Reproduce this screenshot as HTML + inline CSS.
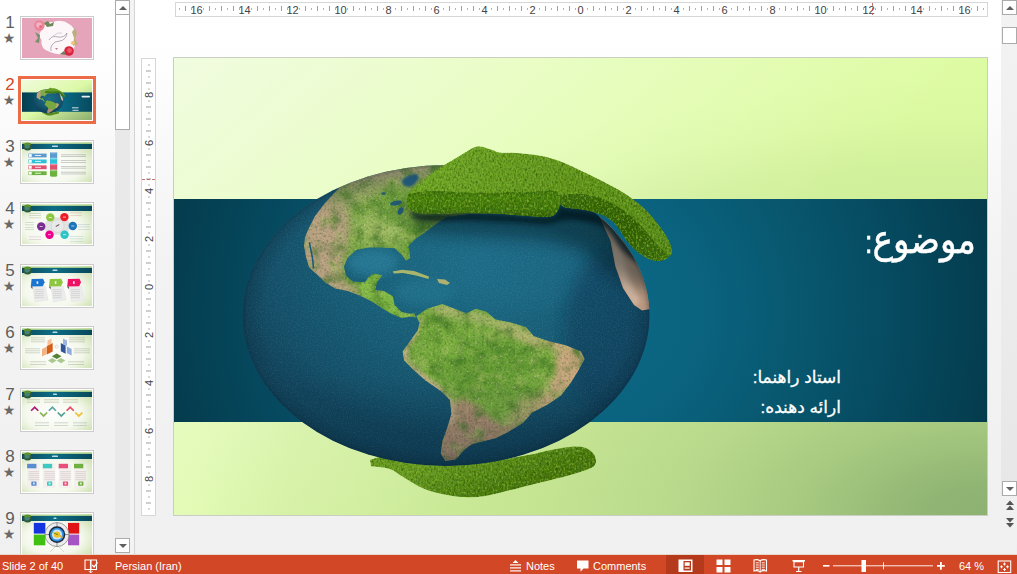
<!DOCTYPE html>
<html lang="fa">
<head>
<meta charset="utf-8">
<title>PowerPoint</title>
<style>
html,body{margin:0;padding:0;}
body{width:1017px;height:574px;overflow:hidden;position:relative;font-family:"Liberation Sans", "DejaVu Sans", sans-serif;
 background:linear-gradient(to bottom,#ffffff 0px,#ffffff 40px,#f3f3f3 260px,#f0f0f0 574px);}
.abs{position:absolute;}
#thumbs{left:0;top:0;width:115px;height:554px;overflow:hidden;}
.tn{position:absolute;left:0;width:115px;height:62px;}
.tn .num{position:absolute;left:3px;top:-3px;width:14px;font-size:17px;color:#5e5e5e;text-align:center;line-height:20px;}
.tn .star{position:absolute;left:2px;top:15px;width:14px;font-size:14px;color:#6a6a6a;text-align:center;line-height:14px;}
.tn .fr{position:absolute;left:20px;top:0;width:72px;height:42px;border:1px solid #cbcbcb;background:#fff;overflow:hidden;}
.tn .fr svg{position:absolute;left:1px;top:1px;}
.tn.sel .num{color:#d24726;}
.tn.sel .fr{left:18px;top:-2px;width:72px;height:42px;border:3px solid #eb6c47;}
.tn.sel .fr svg{left:1px;top:1px}
#tscroll{left:115px;top:0;width:15px;height:554px;background:#e9e9e9;}
.sbtn{position:absolute;background:#fff;border:1px solid #ababab;box-sizing:border-box;}
.arr-up{position:absolute;left:50%;top:50%;width:0;height:0;margin:-2px 0 0 -4px;border-left:4px solid transparent;border-right:4px solid transparent;border-bottom:4px solid #606060;}
.arr-dn{position:absolute;left:50%;top:50%;width:0;height:0;margin:-2px 0 0 -4px;border-left:4px solid transparent;border-right:4px solid transparent;border-top:4px solid #606060;}
#split{left:130px;top:0;width:4px;height:554px;background:#f3f3f3;border-right:1px solid #d4d4d4;}
#hruler{left:175px;top:2px;width:813px;height:15px;background:#fff;border:1px solid #d6d6d6;box-sizing:border-box;}
#vruler{left:141px;top:58px;width:15px;height:458px;background:#fff;border:1px solid #d6d6d6;box-sizing:border-box;}
#rscroll{left:1001px;top:0;width:16px;height:554px;background:linear-gradient(to bottom,#f3f3f3 0,#e7e7e7 496px,transparent 496px);}
#status{left:0;top:554px;width:1017px;height:20px;background:#d24726;color:#fff;font-size:11px;border-top:1px solid #e8d8cc;box-sizing:border-box;}
#status span{position:absolute;top:1px;line-height:21px;white-space:nowrap;}
#slide{left:174px;top:58px;width:813px;height:457px;overflow:hidden;
 background:radial-gradient(ellipse 900px 450px at 100% 100%,rgba(134,171,109,.92) 0%,rgba(134,171,109,.88) 7%,rgba(134,171,109,.64) 20%,rgba(134,171,109,.43) 33.5%,rgba(134,171,109,.28) 50%,rgba(134,171,109,.15) 71%,rgba(134,171,109,.12) 78%,rgba(134,171,109,.08) 83%,rgba(134,171,109,.03) 88%,rgba(134,171,109,0) 97%),linear-gradient(139.3deg,rgb(241,252,224) 0%,rgb(231,253,190) 34%,rgb(221,251,162) 60.6%,rgb(221,251,160) 100%);
 box-shadow:0 0 0 1px #c9cec2;}
#band{left:0;top:141px;width:813px;height:223px;background:radial-gradient(ellipse 430px 420px at 50% 50%,#0c6a87 0%,#0a627e 30%,#08576e 52%,#064b61 72%,#043a4b 100%);}
.t1{position:absolute;right:11px;top:158px;color:#fff;font-size:33px;direction:rtl;white-space:nowrap;line-height:50px;transform:scale(1.04,1.18);transform-origin:100% 58%;-webkit-text-stroke:.45px #fff;}
.t1 span{font-size:27px;}
.t2{position:absolute;right:146px;color:#fff;font-size:17px;direction:rtl;white-space:nowrap;line-height:24px;-webkit-text-stroke:.3px #fff;}
</style>
</head>
<body>
<div id="thumbs" class="abs">
<div class="tn" style="top:16px"><div class="num">1</div><div class="star">&#9733;</div><div class="fr"><svg width="70" height="40" viewBox="0 0 70 40"><rect width="70" height="40" fill="#e5a4b9"/><path d="M19 13 Q21 4 31 4 Q40 .5 47 6 Q55 10 53 21 Q55 32 45 34.500 Q36 38 28 34 Q18 31 19.500 22 Q16 17 19 13 Z" fill="#fdf6f8"/><circle cx="17.400" cy="7.500" r="5.200" fill="#ec8399"/><circle cx="17" cy="7" r="2.800" fill="#f5b3c0"/><circle cx="18.500" cy="8.500" r="1.300" fill="#e0607c"/><circle cx="47" cy="33" r="4.800" fill="#d8243e"/><circle cx="47.500" cy="32.500" r="2.400" fill="#ee5a68"/><path d="M22 5 l4 -2 l2 3 l4 -2 l-1 4 l-6 1 z" fill="#6f8a5a"/><path d="M13 14 l3 6 l-3 4 l4 1 l1 -8 z" fill="#78906a"/><path d="M50 14 l3 -4 l2 5 l-2 6 l3 5 l-5 2 l1 -8 z" fill="#b9b07c"/><circle cx="51" cy="25" r="2" fill="#f1c27a"/><path d="M38 36 l4 -3 l2 4 z" fill="#6b7f58"/><path d="M33 30 l1.500 2 l1.500 -2 z" fill="#c07b8a"/><path d="M27 22 Q30 17 36 19 Q42 20 45 15 Q44 22 38 23 Q32 23 30 27 Q28 30 29 33" fill="none" stroke="#a8a6b2" stroke-width=".9"/><path d="M31 18 Q35 14 40 15" fill="none" stroke="#b8b4c0" stroke-width=".6"/></svg></div></div>
<div class="tn sel" style="top:78px"><div class="num">2</div><div class="star">&#9733;</div><div class="fr"><svg width="70" height="40" viewBox="0 0 70 40"><defs><linearGradient id="t2b" x1="0" y1="0" x2="1" y2="1"><stop offset="0" stop-color="#f0fbde"/><stop offset=".5" stop-color="#dcf9a6"/><stop offset="1" stop-color="#8bae6e"/></linearGradient><linearGradient id="t2h" x1="0" y1="0" x2="1" y2="0"><stop offset="0" stop-color="#053f51"/><stop offset=".55" stop-color="#0b6b87"/><stop offset="1" stop-color="#064a5e"/></linearGradient></defs><rect width="70" height="40" fill="url(#t2b)"/><rect x="0" y="12.4" width="70" height="19.4" fill="url(#t2h)"/><g transform="translate(25.9 21.7) scale(.0752 .0792) translate(-446 -321.5)"><defs><radialGradient id="mo" cx=".55" cy=".38" r=".62"><stop offset="0" stop-color="#1d6c87"/><stop offset=".6" stop-color="#165972"/><stop offset="1" stop-color="#0f4058"/></radialGradient><clipPath id="mgc"><ellipse cx="446" cy="315.500" rx="203.500" ry="150.500"/></clipPath></defs><path d="M370.0 459.8 C370.0 459.8 371.0 466.5 371.0 466.5 C371.0 466.5 384.5 467.2 389.8 469.0 C395.1 470.8 397.2 473.7 403.0 477.0 C408.8 480.3 416.3 485.9 424.3 489.0 C432.3 492.1 442.0 494.4 450.9 495.7 C459.8 497.0 468.5 497.7 477.4 497.0 C486.2 496.3 494.3 493.9 504.0 491.7 C513.7 489.5 525.2 486.4 535.8 483.7 C546.4 481.0 558.8 478.1 567.7 475.7 C576.6 473.2 584.4 471.0 589.0 469.0 C593.6 467.0 594.7 466.2 595.6 463.8 C596.5 461.4 595.8 457.1 594.2 454.5 C592.6 451.9 589.5 449.2 586.0 447.9 C582.5 446.6 578.7 446.2 573.0 446.5 C567.3 446.8 558.9 448.4 551.8 449.7 C544.7 451.0 537.6 453.1 530.5 454.5 C523.4 455.9 516.4 457.2 509.3 458.0 C502.2 458.8 496.9 458.7 488.0 459.0 C479.1 459.3 465.7 460.0 456.0 460.0 C446.3 460.0 438.4 459.5 429.6 459.0 C420.8 458.5 410.5 457.5 403.0 457.0 C395.5 456.5 390.0 455.5 384.5 456.0 C379.0 456.5 370.0 459.8 370.0 459.8 Z" fill="#578b1e"/><ellipse cx="446" cy="315.500" rx="203.500" ry="150.500" fill="url(#mo)"/><g clip-path="url(#mgc)"><path d="M340 187 L325 203 L315 216 L309 228 L305 237 L304 246 L306 257 L309 267 L313 271 L317.900 275.300 L324.900 282.300 L335.300 288.400 L347.500 291 L359.700 295.400 L371.900 301.500 L382.400 308.400 L392.800 314.500 L401.500 318 L412 316.500 L416 317.500 L414 313 L410 313.700 L401.500 312 L394.600 305 L392.800 296.200 L384 291 L375.400 290 L377 282.300 L382.400 275.300 L373.700 273.600 L368.400 277 L365 282.300 L352.700 281.400 L345.800 275.300 L344 266.600 L347.500 257.900 L356.200 250 L368.400 247.400 L380.600 247.400 L394.600 248.300 L401.500 254.400 L405.900 260.500 L410.300 257.900 L408.500 245.700 L415.500 238.700 L426 231.700 L436 224 L446.500 217 L470 214 L500 214 L500 150 L330 150 Z" fill="#82a94c"/><path d="M330 190 L346 187 L350 225 L346 252 L340 268 L346 282 L340 296 L295 270 L300 215 Z" fill="#b8a482"/><path d="M416.300 316.300 L427 308.700 L442.300 304 L454.500 308.700 L466.600 313.300 L475.800 308.700 L486.500 311.800 L495.600 319.400 L510.900 322.400 L526 327 L533.700 336 L547.400 340.700 L565.700 345.300 L581 351.400 L584.600 359 L578 371.200 L570.300 383.400 L561 395.600 L547.400 404.800 L532.200 412.400 L523 423 L507.800 432.200 L495.600 438.300 L483.400 441.300 L471.200 444.400 L463.600 450.500 L456 459.600 L445.300 461 L440.700 453.500 L442.300 441.300 L446.800 429 L451.400 413.900 L449.900 400 L440.700 391 L425.500 380.400 L413.300 369.700 L404.100 360.500 L402.600 351.400 L410.200 340.700 L417.900 330 L419.400 322.400 Z" fill="#78a840"/><path d="M556 340 L590 348 L590 365 L572 388 L550 406 L544 396 L562 372 Z" fill="#c6a680"/><path d="M506 424 L528 414 L492 445 L452 466 L436 460 L440 440 L450 410 L476 412 Z" fill="#ad8e74"/><path d="M596 205 L599.600 217.500 L610.600 241 L615.300 266 L623 288 L634 305 L642 310.600 L650 309 L652 285 L640 250 L625 225 L615 205 Z" fill="#dcc0a8"/></g><path d="M480.2 146.4 C483.3 146.5 486.9 148.2 490.3 149.2 C493.7 150.2 495.9 152.0 500.3 152.6 C504.8 153.2 510.1 152.4 517.0 153.0 C524.0 153.6 534.7 154.5 542.0 155.9 C549.3 157.3 554.3 159.0 560.9 161.5 C567.5 164.0 574.8 167.6 581.8 170.9 C588.8 174.2 595.7 177.7 602.7 181.3 C609.7 185.0 616.6 188.3 623.6 192.8 C630.6 197.3 638.6 203.1 644.5 208.5 C650.4 213.9 655.0 220.0 659.0 225.2 C663.0 230.4 666.3 235.6 668.5 239.8 C670.7 244.0 671.8 247.5 672.0 250.3 C672.2 253.1 671.3 254.8 669.5 256.5 C667.7 258.2 664.3 260.2 661.2 260.7 C658.1 261.2 654.5 261.1 650.7 259.7 C646.9 258.3 642.0 255.4 638.2 252.4 C634.4 249.4 630.8 245.7 627.7 241.9 C624.6 238.1 622.2 233.1 619.4 229.4 C616.6 225.8 614.5 222.6 611.0 220.0 C607.5 217.4 603.4 215.4 598.5 213.7 C593.6 211.9 587.4 210.6 581.8 209.5 C576.2 208.4 568.7 208.4 565.0 207.4 C561.3 206.4 559.8 203.5 559.8 203.5 C559.8 203.5 559.8 206.7 558.8 208.6 C557.8 210.5 556.3 213.8 553.8 215.2 C551.3 216.6 549.9 216.9 543.8 216.9 C537.7 216.9 525.4 215.8 517.0 215.2 C508.6 214.6 502.0 214.0 493.6 213.6 C485.2 213.2 475.5 212.7 466.9 212.7 C458.3 212.7 450.2 213.6 441.8 213.6 C433.4 213.6 422.1 213.5 416.7 212.7 C411.3 211.9 410.9 210.4 409.2 208.6 C407.5 206.8 407.0 204.1 406.7 201.9 C406.4 199.7 406.4 197.4 407.5 195.2 C408.6 193.0 410.5 191.3 413.4 188.5 C416.3 185.7 420.8 181.8 425.0 178.5 C429.2 175.2 433.4 171.8 438.4 168.4 C443.4 165.1 449.6 161.7 455.2 158.4 C460.8 155.1 467.7 150.4 471.9 148.4 C476.1 146.4 477.1 146.3 480.2 146.4 Z" fill="#659d25"/><path d="M408.0 194.0 C408.0 194.0 423.6 191.2 433.4 191.0 C443.2 190.8 455.8 192.4 466.9 192.7 C478.0 193.0 489.2 192.8 500.3 192.7 C511.4 192.5 524.5 192.1 533.7 191.8 C542.9 191.5 551.2 189.6 555.5 191.0 C559.8 192.4 559.1 197.3 559.6 200.2 C560.1 203.1 559.8 206.1 558.8 208.6 C557.8 211.1 556.3 213.8 553.8 215.2 C551.3 216.6 549.9 216.9 543.8 216.9 C537.7 216.9 525.4 215.8 517.0 215.2 C508.6 214.6 502.0 214.0 493.6 213.6 C485.2 213.2 475.5 212.7 466.9 212.7 C458.3 212.7 450.2 213.6 441.8 213.6 C433.4 213.6 422.1 213.5 416.7 212.7 C411.3 211.9 410.9 210.4 409.2 208.6 C407.5 206.8 406.9 204.3 406.7 201.9 C406.5 199.5 408.0 194.0 408.0 194.0 Z" fill="#447b15"/><path d="M560.9 195.0 C560.9 195.0 574.8 193.2 581.8 193.9 C588.8 194.6 595.7 196.2 602.7 199.0 C609.7 201.8 617.3 206.2 623.6 210.6 C629.9 215.0 635.1 220.0 640.3 225.2 C645.5 230.4 650.4 237.0 654.9 241.9 C659.4 246.8 665.0 252.0 667.4 254.4 C669.8 256.8 669.5 256.5 669.5 256.5 C669.5 256.5 664.3 260.2 661.2 260.7 C658.1 261.2 654.5 261.1 650.7 259.7 C646.9 258.3 642.0 255.4 638.2 252.4 C634.4 249.4 630.8 245.7 627.7 241.9 C624.6 238.1 622.2 233.1 619.4 229.4 C616.6 225.8 614.5 222.6 611.0 220.0 C607.5 217.4 603.4 215.4 598.5 213.7 C593.6 211.9 587.4 210.6 581.8 209.5 C576.2 208.4 568.7 208.4 565.0 207.4 C561.3 206.4 559.8 203.5 559.8 203.5 C559.8 203.5 560.9 195.0 560.9 195.0 Z" fill="#3a6c12"/></g><rect x="59.500" y="15.800" width="8.500" height="1.600" rx=".8" fill="#fff" opacity=".9"/><rect x="50" y="27.300" width="6.500" height="1" fill="#fff" opacity=".8"/><rect x="50.500" y="29.800" width="6" height="1" fill="#fff" opacity=".8"/></svg></div></div>
<div class="tn" style="top:140px"><div class="num">3</div><div class="star">&#9733;</div><div class="fr"><svg width="70" height="40" viewBox="0 0 70 40"><defs><radialGradient id="tb3" cx=".45" cy=".6" r=".75"><stop offset="0" stop-color="#ffffff"/><stop offset=".55" stop-color="#f4f8ec"/><stop offset="1" stop-color="#c5dba4"/></radialGradient><linearGradient id="th3" x1="0" y1="0" x2="1" y2="0"><stop offset="0" stop-color="#0a4a5c"/><stop offset=".45" stop-color="#0d6d86"/><stop offset="1" stop-color="#07485a"/></linearGradient></defs><rect width="70" height="40" fill="url(#tb3)"/><rect x="0" y="1" width="70" height="1" fill="#c6e89a"/><rect x="0" y="1.8" width="70" height="5.2" fill="url(#th3)"/><ellipse cx="5.6" cy="4.6" rx="4.2" ry="3.9" fill="#2b5a3a"/><ellipse cx="5.2" cy="4.2" rx="2.6" ry="2.3" fill="#4f8a86" opacity=".8"/><path d="M2 2.200 Q5.500 -.5 9 2.200 L8 3.500 Q5.500 1.800 3 3.500 Z" fill="#5c9422"/><rect x="30.0" y="3.6" width="6.0" height="1.5" rx=".7" fill="#d8eef2" opacity=".85"/><rect x="6.4" y="11.6" width="18.2" height="3.8" fill="#5b9bd0"/><rect x="6.9" y="12.1" width="2.800" height="2.800" fill="#fff"/><rect x="13" y="13.0" width="6" height="1" fill="#fff" opacity=".8"/><rect x="28" y="10.2" width="7.200" height="5.900" fill="#5b9bd0"/><ellipse cx="31.600" cy="10.5" rx="3.600" ry="1" fill="#fff" opacity=".35"/><rect x="6.4" y="17.5" width="18.2" height="3.8" fill="#2fc1d8"/><rect x="6.9" y="18.0" width="2.800" height="2.800" fill="#fff"/><rect x="13" y="18.9" width="6" height="1" fill="#fff" opacity=".8"/><rect x="28" y="16.1" width="7.200" height="5.900" fill="#2fc1d8"/><ellipse cx="31.600" cy="16.4" rx="3.600" ry="1" fill="#fff" opacity=".35"/><rect x="6.4" y="23.4" width="18.2" height="3.8" fill="#e0516f"/><rect x="6.9" y="23.9" width="2.800" height="2.800" fill="#fff"/><rect x="13" y="24.8" width="6" height="1" fill="#fff" opacity=".8"/><rect x="28" y="22.0" width="7.200" height="5.900" fill="#e0516f"/><ellipse cx="31.600" cy="22.3" rx="3.600" ry="1" fill="#fff" opacity=".35"/><rect x="6.4" y="29.3" width="18.2" height="3.8" fill="#6cb33e"/><rect x="6.9" y="29.8" width="2.800" height="2.800" fill="#fff"/><rect x="13" y="30.7" width="6" height="1" fill="#fff" opacity=".8"/><rect x="28" y="27.9" width="7.200" height="5.900" fill="#6cb33e"/><ellipse cx="31.600" cy="28.2" rx="3.600" ry="1" fill="#fff" opacity=".35"/><ellipse cx="31.600" cy="33.800" rx="3.600" ry="1" fill="#6cb33e"/><rect x="39.0" y="12.5" width="25.0" height="0.7" fill="#8a8a8a" opacity="0.6"/><rect x="39.0" y="14.3" width="25.0" height="0.7" fill="#8a8a8a" opacity="0.6"/><rect x="39.0" y="18.3" width="25.0" height="0.7" fill="#8a8a8a" opacity="0.6"/><rect x="39.0" y="20.1" width="25.0" height="0.7" fill="#8a8a8a" opacity="0.6"/><rect x="39.0" y="24.0" width="25.0" height="0.7" fill="#8a8a8a" opacity="0.6"/><rect x="39.0" y="25.8" width="25.0" height="0.7" fill="#8a8a8a" opacity="0.6"/><rect x="39.0" y="29.8" width="25.0" height="0.7" fill="#8a8a8a" opacity="0.6"/><rect x="39.0" y="31.6" width="25.0" height="0.7" fill="#8a8a8a" opacity="0.6"/></svg></div></div>
<div class="tn" style="top:202px"><div class="num">4</div><div class="star">&#9733;</div><div class="fr"><svg width="70" height="40" viewBox="0 0 70 40"><defs><radialGradient id="tb4" cx=".45" cy=".6" r=".75"><stop offset="0" stop-color="#ffffff"/><stop offset=".55" stop-color="#f4f8ec"/><stop offset="1" stop-color="#c5dba4"/></radialGradient><linearGradient id="th4" x1="0" y1="0" x2="1" y2="0"><stop offset="0" stop-color="#0a4a5c"/><stop offset=".45" stop-color="#0d6d86"/><stop offset="1" stop-color="#07485a"/></linearGradient></defs><rect width="70" height="40" fill="url(#tb4)"/><rect x="0" y="1" width="70" height="1" fill="#c6e89a"/><rect x="0" y="1.8" width="70" height="5.2" fill="url(#th4)"/><ellipse cx="5.6" cy="4.6" rx="4.2" ry="3.9" fill="#2b5a3a"/><ellipse cx="5.2" cy="4.2" rx="2.6" ry="2.3" fill="#4f8a86" opacity=".8"/><path d="M2 2.200 Q5.500 -.5 9 2.200 L8 3.500 Q5.500 1.800 3 3.500 Z" fill="#5c9422"/><rect x="33.0" y="3.6" width="0.0" height="1.5" rx=".7" fill="#d8eef2" opacity=".85"/><path d="M28.300 13.400 L42.400 13.100 L50.800 22 L42.600 30.700 L27.500 30.700 L19.200 22.500 Z" fill="#dcdcdc" opacity=".8"/><circle cx="35.600" cy="22" r="6.500" fill="#e9e9e9" stroke="#cfcfcf" stroke-width=".6"/><circle cx="28.3" cy="13.4" r="4.2" fill="#8dc63f"/><rect x="26.8" y="13.0" width="3" height=".8" fill="#fff" opacity=".8"/><circle cx="42.4" cy="13.1" r="4.2" fill="#ee1c25"/><rect x="40.9" y="12.7" width="3" height=".8" fill="#fff" opacity=".8"/><circle cx="50.8" cy="22.0" r="4.2" fill="#1c75bc"/><rect x="49.3" y="21.6" width="3" height=".8" fill="#fff" opacity=".8"/><circle cx="42.6" cy="30.7" r="4.2" fill="#2ec4c6"/><rect x="41.1" y="30.3" width="3" height=".8" fill="#fff" opacity=".8"/><circle cx="27.5" cy="30.7" r="4.2" fill="#ec008c"/><rect x="26.0" y="30.3" width="3" height=".8" fill="#fff" opacity=".8"/><circle cx="19.2" cy="22.5" r="4.2" fill="#7b2d90"/><rect x="17.7" y="22.1" width="3" height=".8" fill="#fff" opacity=".8"/><rect x="33.500" y="21" width="4" height="1" fill="#666" transform="rotate(-30 35.500 21.500)"/><rect x="7.0" y="9.0" width="12.0" height="0.7" fill="#9ab08a" opacity="0.55"/><rect x="7.0" y="11.0" width="12.0" height="0.7" fill="#9ab08a" opacity="0.55"/><rect x="7.0" y="13.5" width="12.0" height="0.7" fill="#9ab08a" opacity="0.55"/><rect x="3.0" y="18.0" width="9.0" height="0.7" fill="#9ab08a" opacity="0.5"/><rect x="3.0" y="20.5" width="9.0" height="0.7" fill="#9ab08a" opacity="0.5"/><rect x="3.0" y="23.0" width="9.0" height="0.7" fill="#9ab08a" opacity="0.5"/><rect x="3.0" y="25.0" width="9.0" height="0.7" fill="#9ab08a" opacity="0.5"/><rect x="7.0" y="32.5" width="12.0" height="0.7" fill="#c9a0c0" opacity="0.5"/><rect x="7.0" y="35.0" width="12.0" height="0.7" fill="#c9a0c0" opacity="0.5"/><rect x="48.0" y="8.5" width="12.0" height="0.7" fill="#d59a9a" opacity="0.5"/><rect x="48.0" y="11.0" width="12.0" height="0.7" fill="#d59a9a" opacity="0.5"/><rect x="56.0" y="20.0" width="12.0" height="0.7" fill="#9ab0c8" opacity="0.5"/><rect x="56.0" y="22.5" width="12.0" height="0.7" fill="#9ab0c8" opacity="0.5"/><rect x="56.0" y="25.0" width="12.0" height="0.7" fill="#9ab0c8" opacity="0.5"/><rect x="48.0" y="32.0" width="13.0" height="0.7" fill="#9ac8c8" opacity="0.5"/><rect x="48.0" y="34.5" width="13.0" height="0.7" fill="#9ac8c8" opacity="0.5"/><rect x="48.0" y="37.0" width="13.0" height="0.7" fill="#9ac8c8" opacity="0.5"/></svg></div></div>
<div class="tn" style="top:264px"><div class="num">5</div><div class="star">&#9733;</div><div class="fr"><svg width="70" height="40" viewBox="0 0 70 40"><defs><radialGradient id="tb5" cx=".45" cy=".6" r=".75"><stop offset="0" stop-color="#ffffff"/><stop offset=".55" stop-color="#f4f8ec"/><stop offset="1" stop-color="#c5dba4"/></radialGradient><linearGradient id="th5" x1="0" y1="0" x2="1" y2="0"><stop offset="0" stop-color="#0a4a5c"/><stop offset=".45" stop-color="#0d6d86"/><stop offset="1" stop-color="#07485a"/></linearGradient></defs><rect width="70" height="40" fill="url(#tb5)"/><rect x="0" y="1" width="70" height="1" fill="#c6e89a"/><rect x="0" y="1.8" width="70" height="5.2" fill="url(#th5)"/><ellipse cx="5.6" cy="4.6" rx="4.2" ry="3.9" fill="#2b5a3a"/><ellipse cx="5.2" cy="4.2" rx="2.6" ry="2.3" fill="#4f8a86" opacity=".8"/><path d="M2 2.200 Q5.500 -.5 9 2.200 L8 3.500 Q5.500 1.800 3 3.500 Z" fill="#5c9422"/><rect x="30.5" y="3.6" width="5.0" height="1.5" rx=".7" fill="#d8eef2" opacity=".85"/><path d="M10.6 21 l12.500 -1 l3 14 l-13 2 z" fill="#ececec" stroke="#dadada" stroke-width=".3"/><rect x="12.6" y="23.5" width="9.0" height="0.6" fill="#a0a0a0" opacity="0.5"/><rect x="12.6" y="25.5" width="9.0" height="0.6" fill="#a0a0a0" opacity="0.5"/><rect x="12.6" y="27.5" width="9.0" height="0.6" fill="#a0a0a0" opacity="0.5"/><rect x="12.6" y="29.5" width="9.0" height="0.6" fill="#a0a0a0" opacity="0.5"/><rect x="12.6" y="31.5" width="9.0" height="0.6" fill="#a0a0a0" opacity="0.5"/><path d="M8.6 20.500 l1.800 0 l0 2.800 z" fill="#3a3a2a"/><path d="M9.6 13 l11.500 -.3 l1.500 3.500 l-1.800 4 l-12 .4 z" fill="#1b75d0"/><rect x="14.6" y="15.300" width="1.600" height="2.600" fill="#fff" opacity=".9"/><path d="M28.8 21 l12.500 -1 l3 14 l-13 2 z" fill="#ececec" stroke="#dadada" stroke-width=".3"/><rect x="30.8" y="23.5" width="9.0" height="0.6" fill="#a0a0a0" opacity="0.5"/><rect x="30.8" y="25.5" width="9.0" height="0.6" fill="#a0a0a0" opacity="0.5"/><rect x="30.8" y="27.5" width="9.0" height="0.6" fill="#a0a0a0" opacity="0.5"/><rect x="30.8" y="29.5" width="9.0" height="0.6" fill="#a0a0a0" opacity="0.5"/><rect x="30.8" y="31.5" width="9.0" height="0.6" fill="#a0a0a0" opacity="0.5"/><path d="M26.8 20.500 l1.800 0 l0 2.800 z" fill="#3a3a2a"/><path d="M27.8 13 l11.500 -.3 l1.500 3.500 l-1.800 4 l-12 .4 z" fill="#8dc63f"/><rect x="32.8" y="15.300" width="1.600" height="2.600" fill="#fff" opacity=".9"/><path d="M47.0 21 l12.500 -1 l3 14 l-13 2 z" fill="#ececec" stroke="#dadada" stroke-width=".3"/><rect x="49.0" y="23.5" width="9.0" height="0.6" fill="#a0a0a0" opacity="0.5"/><rect x="49.0" y="25.5" width="9.0" height="0.6" fill="#a0a0a0" opacity="0.5"/><rect x="49.0" y="27.5" width="9.0" height="0.6" fill="#a0a0a0" opacity="0.5"/><rect x="49.0" y="29.5" width="9.0" height="0.6" fill="#a0a0a0" opacity="0.5"/><rect x="49.0" y="31.5" width="9.0" height="0.6" fill="#a0a0a0" opacity="0.5"/><path d="M45.0 20.500 l1.800 0 l0 2.800 z" fill="#3a3a2a"/><path d="M46.0 13 l11.500 -.3 l1.500 3.500 l-1.800 4 l-12 .4 z" fill="#ee1164"/><rect x="51.0" y="15.300" width="1.600" height="2.600" fill="#fff" opacity=".9"/></svg></div></div>
<div class="tn" style="top:326px"><div class="num">6</div><div class="star">&#9733;</div><div class="fr"><svg width="70" height="40" viewBox="0 0 70 40"><defs><radialGradient id="tb6" cx=".45" cy=".6" r=".75"><stop offset="0" stop-color="#ffffff"/><stop offset=".55" stop-color="#f4f8ec"/><stop offset="1" stop-color="#c5dba4"/></radialGradient><linearGradient id="th6" x1="0" y1="0" x2="1" y2="0"><stop offset="0" stop-color="#0a4a5c"/><stop offset=".45" stop-color="#0d6d86"/><stop offset="1" stop-color="#07485a"/></linearGradient></defs><rect width="70" height="40" fill="url(#tb6)"/><rect x="0" y="1" width="70" height="1" fill="#c6e89a"/><rect x="0" y="1.8" width="70" height="5.2" fill="url(#th6)"/><ellipse cx="5.6" cy="4.6" rx="4.2" ry="3.9" fill="#2b5a3a"/><ellipse cx="5.2" cy="4.2" rx="2.6" ry="2.3" fill="#4f8a86" opacity=".8"/><path d="M2 2.200 Q5.500 -.5 9 2.200 L8 3.500 Q5.500 1.800 3 3.500 Z" fill="#5c9422"/><rect x="30.5" y="3.6" width="5.0" height="1.5" rx=".7" fill="#d8eef2" opacity=".85"/><path d="M24.900 18 l5.800 -3 l0 8.500 l-5.800 3 z" fill="#d2601a"/><path d="M20 21 l4.900 -2.500 l0 7.500 l-4.900 2.500 z" fill="#f4b183"/><path d="M25.500 12.500 l4 -2 l0 5 l-4 2 z" fill="#f6c19b"/><path d="M38.800 14.900 l4.800 2.500 l0 8.300 l-4.800 -2.500 z" fill="#2f5597"/><path d="M41 10.500 l4 2 l0 5.400 l-4 -2 z" fill="#9db3e0"/><path d="M44.800 18.500 l4.800 2.500 l0 6.500 l-4.800 -2.500 z" fill="#8faadc"/><path d="M34.700 25.500 l4.800 2.800 l-4.800 2.800 l-4.800 -2.800 z" fill="#548235"/><path d="M30.300 30 l4.300 2.600 l-4.300 2.600 l-4.300 -2.600 z" fill="#a9c98e"/><path d="M39 30 l4.300 2.600 l-4.300 2.600 l-4.300 -2.600 z" fill="#a9c98e"/><circle cx="34.600" cy="18.700" r="1.500" fill="#fff" stroke="#b0a0a0" stroke-width=".4"/><rect x="9.0" y="9.5" width="14.0" height="0.7" fill="#8a9a7a" opacity="0.5"/><rect x="9.0" y="11.5" width="14.0" height="0.7" fill="#8a9a7a" opacity="0.5"/><rect x="9.0" y="13.5" width="14.0" height="0.7" fill="#8a9a7a" opacity="0.5"/><rect x="3.0" y="20.5" width="15.0" height="0.7" fill="#8a9a7a" opacity="0.5"/><rect x="3.0" y="22.5" width="15.0" height="0.7" fill="#8a9a7a" opacity="0.5"/><rect x="3.0" y="24.5" width="15.0" height="0.7" fill="#8a9a7a" opacity="0.5"/><rect x="47.0" y="9.5" width="16.0" height="0.7" fill="#8a9a7a" opacity="0.5"/><rect x="47.0" y="11.5" width="16.0" height="0.7" fill="#8a9a7a" opacity="0.5"/><rect x="47.0" y="13.5" width="16.0" height="0.7" fill="#8a9a7a" opacity="0.5"/><rect x="52.0" y="20.5" width="16.0" height="0.7" fill="#8a9a7a" opacity="0.5"/><rect x="52.0" y="22.5" width="16.0" height="0.7" fill="#8a9a7a" opacity="0.5"/><rect x="52.0" y="24.5" width="16.0" height="0.7" fill="#8a9a7a" opacity="0.5"/><rect x="8.0" y="33.5" width="16.0" height="0.7" fill="#8a9a7a" opacity="0.5"/><rect x="8.0" y="36.0" width="16.0" height="0.7" fill="#8a9a7a" opacity="0.5"/><rect x="46.0" y="33.5" width="16.0" height="0.7" fill="#8a9a7a" opacity="0.5"/><rect x="46.0" y="36.0" width="16.0" height="0.7" fill="#8a9a7a" opacity="0.5"/></svg></div></div>
<div class="tn" style="top:388px"><div class="num">7</div><div class="star">&#9733;</div><div class="fr"><svg width="70" height="40" viewBox="0 0 70 40"><defs><radialGradient id="tb7" cx=".45" cy=".6" r=".75"><stop offset="0" stop-color="#ffffff"/><stop offset=".55" stop-color="#f4f8ec"/><stop offset="1" stop-color="#c5dba4"/></radialGradient><linearGradient id="th7" x1="0" y1="0" x2="1" y2="0"><stop offset="0" stop-color="#0a4a5c"/><stop offset=".45" stop-color="#0d6d86"/><stop offset="1" stop-color="#07485a"/></linearGradient></defs><rect width="70" height="40" fill="url(#tb7)"/><rect x="0" y="1" width="70" height="1" fill="#c6e89a"/><rect x="0" y="1.8" width="70" height="5.2" fill="url(#th7)"/><ellipse cx="5.6" cy="4.6" rx="4.2" ry="3.9" fill="#2b5a3a"/><ellipse cx="5.2" cy="4.2" rx="2.6" ry="2.3" fill="#4f8a86" opacity=".8"/><path d="M2 2.200 Q5.500 -.5 9 2.200 L8 3.500 Q5.500 1.800 3 3.500 Z" fill="#5c9422"/><rect x="31.0" y="3.6" width="4.0" height="1.5" rx=".7" fill="#d8eef2" opacity=".85"/><path d="M8.5 20.300 l4.200 -4.300 l4.200 4.300 l-1.200 1 l-3 -2.800 l-3 2.800 z" fill="#b01e78"/><path d="M26.2 20.300 l4.200 -4.300 l4.200 4.300 l-1.200 1 l-3 -2.800 l-3 2.800 z" fill="#5fa7a8"/><path d="M44.0 20.300 l4.200 -4.300 l4.200 4.300 l-1.200 1 l-3 -2.800 l-3 2.800 z" fill="#e0506a"/><path d="M17.4 23 l4.200 4.300 l4.200 -4.300 l-1.200 -1 l-3 2.800 l-3 -2.800 z" fill="#8db255"/><path d="M35.1 23 l4.200 4.300 l4.200 -4.300 l-1.200 -1 l-3 2.800 l-3 -2.800 z" fill="#54a090"/><path d="M52.6 23 l4.200 4.300 l4.200 -4.300 l-1.200 -1 l-3 2.800 l-3 -2.800 z" fill="#f0c030"/><rect x="5.0" y="9.5" width="13.0" height="0.7" fill="#8a9a6a" opacity="0.55"/><rect x="5.0" y="11.8" width="13.0" height="0.7" fill="#8a9a6a" opacity="0.55"/><rect x="22.0" y="9.5" width="15.0" height="0.7" fill="#8a9a6a" opacity="0.55"/><rect x="22.0" y="11.8" width="15.0" height="0.7" fill="#8a9a6a" opacity="0.55"/><rect x="41.0" y="9.5" width="15.0" height="0.7" fill="#8a9a6a" opacity="0.55"/><rect x="41.0" y="11.8" width="15.0" height="0.7" fill="#8a9a6a" opacity="0.55"/><rect x="13.0" y="32.5" width="14.0" height="0.7" fill="#8a9a8a" opacity="0.5"/><rect x="13.0" y="35.0" width="14.0" height="0.7" fill="#8a9a8a" opacity="0.5"/><rect x="32.0" y="32.5" width="14.0" height="0.7" fill="#8a9a8a" opacity="0.5"/><rect x="32.0" y="35.0" width="14.0" height="0.7" fill="#8a9a8a" opacity="0.5"/><rect x="51.0" y="32.5" width="14.0" height="0.7" fill="#8a9aaa" opacity="0.5"/><rect x="51.0" y="35.0" width="14.0" height="0.7" fill="#8a9aaa" opacity="0.5"/></svg></div></div>
<div class="tn" style="top:450px"><div class="num">8</div><div class="star">&#9733;</div><div class="fr"><svg width="70" height="40" viewBox="0 0 70 40"><defs><radialGradient id="tb8" cx=".45" cy=".6" r=".75"><stop offset="0" stop-color="#ffffff"/><stop offset=".55" stop-color="#f4f8ec"/><stop offset="1" stop-color="#c5dba4"/></radialGradient><linearGradient id="th8" x1="0" y1="0" x2="1" y2="0"><stop offset="0" stop-color="#0a4a5c"/><stop offset=".45" stop-color="#0d6d86"/><stop offset="1" stop-color="#07485a"/></linearGradient></defs><rect width="70" height="40" fill="url(#tb8)"/><rect x="0" y="1" width="70" height="1" fill="#c6e89a"/><rect x="0" y="1.8" width="70" height="5.2" fill="url(#th8)"/><ellipse cx="5.6" cy="4.6" rx="4.2" ry="3.9" fill="#2b5a3a"/><ellipse cx="5.2" cy="4.2" rx="2.6" ry="2.3" fill="#4f8a86" opacity=".8"/><path d="M2 2.200 Q5.500 -.5 9 2.200 L8 3.500 Q5.500 1.800 3 3.500 Z" fill="#5c9422"/><rect x="30.0" y="3.6" width="6.0" height="1.5" rx=".7" fill="#d8eef2" opacity=".85"/><rect x="5.1" y="11.800" width="12.500" height="24" fill="#f3eeee" opacity=".8"/><rect x="5.1" y="11.800" width="9.300" height="4.500" fill="#5b8bd0"/><rect x="6.6" y="19.5" width="10.5" height="0.6" fill="#b09a9a" opacity="0.55"/><rect x="6.6" y="21.5" width="10.5" height="0.6" fill="#b09a9a" opacity="0.55"/><rect x="6.6" y="23.5" width="10.5" height="0.6" fill="#b09a9a" opacity="0.55"/><rect x="6.6" y="25.5" width="10.5" height="0.6" fill="#b09a9a" opacity="0.55"/><rect x="6.6" y="27.5" width="10.5" height="0.6" fill="#b09a9a" opacity="0.55"/><rect x="9.3" y="29.400" width="5.200" height="4.300" rx=".6" fill="#5b8bd0"/><rect x="11.0" y="30.600" width="1.800" height="1.800" fill="#fff" opacity=".85"/><rect x="20.8" y="11.800" width="12.500" height="24" fill="#f3eeee" opacity=".8"/><rect x="20.8" y="11.800" width="9.300" height="4.500" fill="#3fc8c0"/><rect x="22.3" y="19.5" width="10.5" height="0.6" fill="#b09a9a" opacity="0.55"/><rect x="22.3" y="21.5" width="10.5" height="0.6" fill="#b09a9a" opacity="0.55"/><rect x="22.3" y="23.5" width="10.5" height="0.6" fill="#b09a9a" opacity="0.55"/><rect x="22.3" y="25.5" width="10.5" height="0.6" fill="#b09a9a" opacity="0.55"/><rect x="22.3" y="27.5" width="10.5" height="0.6" fill="#b09a9a" opacity="0.55"/><rect x="25.0" y="29.400" width="5.200" height="4.300" rx=".6" fill="#3fc8c0"/><rect x="26.7" y="30.600" width="1.800" height="1.800" fill="#fff" opacity=".85"/><rect x="36.7" y="11.800" width="12.500" height="24" fill="#f3eeee" opacity=".8"/><rect x="36.7" y="11.800" width="9.300" height="4.500" fill="#e8507a"/><rect x="38.2" y="19.5" width="10.5" height="0.6" fill="#b09a9a" opacity="0.55"/><rect x="38.2" y="21.5" width="10.5" height="0.6" fill="#b09a9a" opacity="0.55"/><rect x="38.2" y="23.5" width="10.5" height="0.6" fill="#b09a9a" opacity="0.55"/><rect x="38.2" y="25.5" width="10.5" height="0.6" fill="#b09a9a" opacity="0.55"/><rect x="38.2" y="27.5" width="10.5" height="0.6" fill="#b09a9a" opacity="0.55"/><rect x="40.9" y="29.400" width="5.200" height="4.300" rx=".6" fill="#e8507a"/><rect x="42.6" y="30.600" width="1.800" height="1.800" fill="#fff" opacity=".85"/><rect x="52.0" y="11.800" width="12.500" height="24" fill="#f3eeee" opacity=".8"/><rect x="52.0" y="11.800" width="9.300" height="4.500" fill="#70b040"/><rect x="53.5" y="19.5" width="10.5" height="0.6" fill="#b09a9a" opacity="0.55"/><rect x="53.5" y="21.5" width="10.5" height="0.6" fill="#b09a9a" opacity="0.55"/><rect x="53.5" y="23.5" width="10.5" height="0.6" fill="#b09a9a" opacity="0.55"/><rect x="53.5" y="25.5" width="10.5" height="0.6" fill="#b09a9a" opacity="0.55"/><rect x="53.5" y="27.5" width="10.5" height="0.6" fill="#b09a9a" opacity="0.55"/><rect x="56.2" y="29.400" width="5.200" height="4.300" rx=".6" fill="#70b040"/><rect x="57.9" y="30.600" width="1.800" height="1.800" fill="#fff" opacity=".85"/></svg></div></div>
<div class="tn" style="top:512px"><div class="num">9</div><div class="star">&#9733;</div><div class="fr"><svg width="70" height="40" viewBox="0 0 70 40"><defs><radialGradient id="tb9" cx=".45" cy=".6" r=".75"><stop offset="0" stop-color="#ffffff"/><stop offset=".55" stop-color="#f4f8ec"/><stop offset="1" stop-color="#c5dba4"/></radialGradient><linearGradient id="th9" x1="0" y1="0" x2="1" y2="0"><stop offset="0" stop-color="#0a4a5c"/><stop offset=".45" stop-color="#0d6d86"/><stop offset="1" stop-color="#07485a"/></linearGradient></defs><rect width="70" height="40" fill="url(#tb9)"/><rect x="0" y="1" width="70" height="1" fill="#c6e89a"/><rect x="0" y="1.8" width="70" height="5.2" fill="url(#th9)"/><ellipse cx="5.6" cy="4.6" rx="4.2" ry="3.9" fill="#2b5a3a"/><ellipse cx="5.2" cy="4.2" rx="2.6" ry="2.3" fill="#4f8a86" opacity=".8"/><path d="M2 2.200 Q5.500 -.5 9 2.200 L8 3.500 Q5.500 1.800 3 3.500 Z" fill="#5c9422"/><rect x="31.5" y="3.6" width="3.0" height="1.5" rx=".7" fill="#d8eef2" opacity=".85"/><rect x="11.800" y="8.900" width="11.700" height="10.700" fill="#1434e0"/><rect x="46" y="8.900" width="11.200" height="10.700" fill="#e01414"/><rect x="11.800" y="20.600" width="11.700" height="10.700" fill="#40c012"/><rect x="46" y="20.600" width="11.200" height="10.700" fill="#a556c4"/><rect x="23.500" y="8.900" width="6" height="22.400" fill="#fff" opacity=".5"/><rect x="41" y="8.900" width="5" height="22.400" fill="#fff" opacity=".4"/><path d="M28 38 L35 31 L42 38" fill="none" stroke="#cfcfcf" stroke-width=".8"/><circle cx="35" cy="20.600" r="12" fill="#ececec" stroke="#7a7a7a" stroke-width=".7"/><path d="M35 8.600 V32.600 M23 20.600 H47" stroke="#555" stroke-width=".6"/><circle cx="35" cy="20.600" r="8.300" fill="#18263c"/><circle cx="35" cy="20.600" r="6.900" fill="#3192e4"/><circle cx="35" cy="20.600" r="5" fill="#cfe6f6"/><circle cx="35" cy="20.600" r="3.200" fill="#f0c224"/><path d="M28.500 17.500 L36 20 L35.500 21.200 Z" fill="#5a9a2a"/><path d="M37 20 l4.500 3.800 l-2.500 .2 z" fill="#f0a020"/></svg></div></div>
</div>
<div id="tscroll" class="abs">
<div class="sbtn" style="left:0;top:0;width:15px;height:15px"><div class="arr-up"></div></div>
<div class="sbtn" style="left:0;top:14px;width:15px;height:116px"></div>
<div class="sbtn" style="left:0;top:538px;width:15px;height:15px"><div class="arr-dn"></div></div>
</div>
<div id="split" class="abs"></div>
<div id="hruler" class="abs"></div>
<svg class="abs" style="left:175px;top:2px" width="812" height="14" font-family='Liberation Sans, DejaVu Sans, sans-serif' font-size="11" fill="#444">
<rect x="4.0" y="6" width="1" height="2" fill="#b4b4b4"/><rect x="10.0" y="4" width="1" height="5" fill="#a0a0a0"/><rect x="16.0" y="6" width="1" height="2" fill="#b4b4b4"/><text x="21.5" y="11.5" text-anchor="middle">16</text><rect x="28.0" y="6" width="1" height="2" fill="#b4b4b4"/><rect x="34.0" y="4" width="1" height="5" fill="#a0a0a0"/><rect x="40.0" y="6" width="1" height="2" fill="#b4b4b4"/><rect x="46.0" y="4" width="1" height="5" fill="#a0a0a0"/><rect x="52.0" y="6" width="1" height="2" fill="#b4b4b4"/><rect x="58.0" y="4" width="1" height="5" fill="#a0a0a0"/><rect x="64.0" y="6" width="1" height="2" fill="#b4b4b4"/><text x="69.5" y="11.5" text-anchor="middle">14</text><rect x="76.0" y="6" width="1" height="2" fill="#b4b4b4"/><rect x="82.0" y="4" width="1" height="5" fill="#a0a0a0"/><rect x="88.0" y="6" width="1" height="2" fill="#b4b4b4"/><rect x="94.0" y="4" width="1" height="5" fill="#a0a0a0"/><rect x="100.0" y="6" width="1" height="2" fill="#b4b4b4"/><rect x="106.0" y="4" width="1" height="5" fill="#a0a0a0"/><rect x="112.0" y="6" width="1" height="2" fill="#b4b4b4"/><text x="117.5" y="11.5" text-anchor="middle">12</text><rect x="124.0" y="6" width="1" height="2" fill="#b4b4b4"/><rect x="130.0" y="4" width="1" height="5" fill="#a0a0a0"/><rect x="136.0" y="6" width="1" height="2" fill="#b4b4b4"/><rect x="142.0" y="4" width="1" height="5" fill="#a0a0a0"/><rect x="148.0" y="6" width="1" height="2" fill="#b4b4b4"/><rect x="154.0" y="4" width="1" height="5" fill="#a0a0a0"/><rect x="160.0" y="6" width="1" height="2" fill="#b4b4b4"/><text x="165.5" y="11.5" text-anchor="middle">10</text><rect x="172.0" y="6" width="1" height="2" fill="#b4b4b4"/><rect x="178.0" y="4" width="1" height="5" fill="#a0a0a0"/><rect x="184.0" y="6" width="1" height="2" fill="#b4b4b4"/><rect x="190.0" y="4" width="1" height="5" fill="#a0a0a0"/><rect x="196.0" y="6" width="1" height="2" fill="#b4b4b4"/><rect x="202.0" y="4" width="1" height="5" fill="#a0a0a0"/><rect x="208.0" y="6" width="1" height="2" fill="#b4b4b4"/><text x="213.5" y="11.5" text-anchor="middle">8</text><rect x="220.0" y="6" width="1" height="2" fill="#b4b4b4"/><rect x="226.0" y="4" width="1" height="5" fill="#a0a0a0"/><rect x="232.0" y="6" width="1" height="2" fill="#b4b4b4"/><rect x="238.0" y="4" width="1" height="5" fill="#a0a0a0"/><rect x="244.0" y="6" width="1" height="2" fill="#b4b4b4"/><rect x="250.0" y="4" width="1" height="5" fill="#a0a0a0"/><rect x="256.0" y="6" width="1" height="2" fill="#b4b4b4"/><text x="261.5" y="11.5" text-anchor="middle">6</text><rect x="268.0" y="6" width="1" height="2" fill="#b4b4b4"/><rect x="274.0" y="4" width="1" height="5" fill="#a0a0a0"/><rect x="280.0" y="6" width="1" height="2" fill="#b4b4b4"/><rect x="286.0" y="4" width="1" height="5" fill="#a0a0a0"/><rect x="292.0" y="6" width="1" height="2" fill="#b4b4b4"/><rect x="298.0" y="4" width="1" height="5" fill="#a0a0a0"/><rect x="304.0" y="6" width="1" height="2" fill="#b4b4b4"/><text x="309.5" y="11.5" text-anchor="middle">4</text><rect x="316.0" y="6" width="1" height="2" fill="#b4b4b4"/><rect x="322.0" y="4" width="1" height="5" fill="#a0a0a0"/><rect x="328.0" y="6" width="1" height="2" fill="#b4b4b4"/><rect x="334.0" y="4" width="1" height="5" fill="#a0a0a0"/><rect x="340.0" y="6" width="1" height="2" fill="#b4b4b4"/><rect x="346.0" y="4" width="1" height="5" fill="#a0a0a0"/><rect x="352.0" y="6" width="1" height="2" fill="#b4b4b4"/><text x="357.5" y="11.5" text-anchor="middle">2</text><rect x="364.0" y="6" width="1" height="2" fill="#b4b4b4"/><rect x="370.0" y="4" width="1" height="5" fill="#a0a0a0"/><rect x="376.0" y="6" width="1" height="2" fill="#b4b4b4"/><rect x="382.0" y="4" width="1" height="5" fill="#a0a0a0"/><rect x="388.0" y="6" width="1" height="2" fill="#b4b4b4"/><rect x="394.0" y="4" width="1" height="5" fill="#a0a0a0"/><rect x="400.0" y="6" width="1" height="2" fill="#b4b4b4"/><text x="405.5" y="11.5" text-anchor="middle">0</text><rect x="412.0" y="6" width="1" height="2" fill="#b4b4b4"/><rect x="418.0" y="4" width="1" height="5" fill="#a0a0a0"/><rect x="424.0" y="6" width="1" height="2" fill="#b4b4b4"/><rect x="430.0" y="4" width="1" height="5" fill="#a0a0a0"/><rect x="436.0" y="6" width="1" height="2" fill="#b4b4b4"/><rect x="442.0" y="4" width="1" height="5" fill="#a0a0a0"/><rect x="448.0" y="6" width="1" height="2" fill="#b4b4b4"/><text x="453.5" y="11.5" text-anchor="middle">2</text><rect x="460.0" y="6" width="1" height="2" fill="#b4b4b4"/><rect x="466.0" y="4" width="1" height="5" fill="#a0a0a0"/><rect x="472.0" y="6" width="1" height="2" fill="#b4b4b4"/><rect x="478.0" y="4" width="1" height="5" fill="#a0a0a0"/><rect x="484.0" y="6" width="1" height="2" fill="#b4b4b4"/><rect x="490.0" y="4" width="1" height="5" fill="#a0a0a0"/><rect x="496.0" y="6" width="1" height="2" fill="#b4b4b4"/><text x="501.5" y="11.5" text-anchor="middle">4</text><rect x="508.0" y="6" width="1" height="2" fill="#b4b4b4"/><rect x="514.0" y="4" width="1" height="5" fill="#a0a0a0"/><rect x="520.0" y="6" width="1" height="2" fill="#b4b4b4"/><rect x="526.0" y="4" width="1" height="5" fill="#a0a0a0"/><rect x="532.0" y="6" width="1" height="2" fill="#b4b4b4"/><rect x="538.0" y="4" width="1" height="5" fill="#a0a0a0"/><rect x="544.0" y="6" width="1" height="2" fill="#b4b4b4"/><text x="549.5" y="11.5" text-anchor="middle">6</text><rect x="556.0" y="6" width="1" height="2" fill="#b4b4b4"/><rect x="562.0" y="4" width="1" height="5" fill="#a0a0a0"/><rect x="568.0" y="6" width="1" height="2" fill="#b4b4b4"/><rect x="574.0" y="4" width="1" height="5" fill="#a0a0a0"/><rect x="580.0" y="6" width="1" height="2" fill="#b4b4b4"/><rect x="586.0" y="4" width="1" height="5" fill="#a0a0a0"/><rect x="592.0" y="6" width="1" height="2" fill="#b4b4b4"/><text x="597.5" y="11.5" text-anchor="middle">8</text><rect x="604.0" y="6" width="1" height="2" fill="#b4b4b4"/><rect x="610.0" y="4" width="1" height="5" fill="#a0a0a0"/><rect x="616.0" y="6" width="1" height="2" fill="#b4b4b4"/><rect x="622.0" y="4" width="1" height="5" fill="#a0a0a0"/><rect x="628.0" y="6" width="1" height="2" fill="#b4b4b4"/><rect x="634.0" y="4" width="1" height="5" fill="#a0a0a0"/><rect x="640.0" y="6" width="1" height="2" fill="#b4b4b4"/><text x="645.5" y="11.5" text-anchor="middle">10</text><rect x="652.0" y="6" width="1" height="2" fill="#b4b4b4"/><rect x="658.0" y="4" width="1" height="5" fill="#a0a0a0"/><rect x="664.0" y="6" width="1" height="2" fill="#b4b4b4"/><rect x="670.0" y="4" width="1" height="5" fill="#a0a0a0"/><rect x="676.0" y="6" width="1" height="2" fill="#b4b4b4"/><rect x="682.0" y="4" width="1" height="5" fill="#a0a0a0"/><rect x="688.0" y="6" width="1" height="2" fill="#b4b4b4"/><text x="693.5" y="11.5" text-anchor="middle">12</text><rect x="700.0" y="6" width="1" height="2" fill="#b4b4b4"/><rect x="706.0" y="4" width="1" height="5" fill="#a0a0a0"/><rect x="712.0" y="6" width="1" height="2" fill="#b4b4b4"/><rect x="718.0" y="4" width="1" height="5" fill="#a0a0a0"/><rect x="724.0" y="6" width="1" height="2" fill="#b4b4b4"/><rect x="730.0" y="4" width="1" height="5" fill="#a0a0a0"/><rect x="736.0" y="6" width="1" height="2" fill="#b4b4b4"/><text x="741.5" y="11.5" text-anchor="middle">14</text><rect x="748.0" y="6" width="1" height="2" fill="#b4b4b4"/><rect x="754.0" y="4" width="1" height="5" fill="#a0a0a0"/><rect x="760.0" y="6" width="1" height="2" fill="#b4b4b4"/><rect x="766.0" y="4" width="1" height="5" fill="#a0a0a0"/><rect x="772.0" y="6" width="1" height="2" fill="#b4b4b4"/><rect x="778.0" y="4" width="1" height="5" fill="#a0a0a0"/><rect x="784.0" y="6" width="1" height="2" fill="#b4b4b4"/><text x="789.5" y="11.5" text-anchor="middle">16</text><rect x="796.0" y="6" width="1" height="2" fill="#b4b4b4"/><rect x="802.0" y="4" width="1" height="5" fill="#a0a0a0"/><rect x="808.0" y="6" width="1" height="2" fill="#b4b4b4"/><path d="M697.5 1 V13" stroke="#c0504d" stroke-width="1" stroke-dasharray="3 2" opacity=".8"/></svg>
<div id="vruler" class="abs"></div>
<svg class="abs" style="left:141px;top:58px" width="15" height="458" font-family='Liberation Sans, DejaVu Sans, sans-serif' font-size="11" fill="#444">
<rect x="7" y="6.5" width="2" height="1" fill="#b4b4b4"/><rect x="5" y="12.5" width="5" height="1" fill="#a0a0a0"/><rect x="7" y="18.5" width="2" height="1" fill="#b4b4b4"/><rect x="5" y="24.5" width="5" height="1" fill="#a0a0a0"/><rect x="7" y="30.5" width="2" height="1" fill="#b4b4b4"/><text transform="translate(11.5 37.0) rotate(-90)" text-anchor="middle">8</text><rect x="7" y="42.5" width="2" height="1" fill="#b4b4b4"/><rect x="5" y="48.5" width="5" height="1" fill="#a0a0a0"/><rect x="7" y="54.5" width="2" height="1" fill="#b4b4b4"/><rect x="5" y="60.5" width="5" height="1" fill="#a0a0a0"/><rect x="7" y="66.5" width="2" height="1" fill="#b4b4b4"/><rect x="5" y="72.5" width="5" height="1" fill="#a0a0a0"/><rect x="7" y="78.5" width="2" height="1" fill="#b4b4b4"/><text transform="translate(11.5 85.0) rotate(-90)" text-anchor="middle">6</text><rect x="7" y="90.5" width="2" height="1" fill="#b4b4b4"/><rect x="5" y="96.5" width="5" height="1" fill="#a0a0a0"/><rect x="7" y="102.5" width="2" height="1" fill="#b4b4b4"/><rect x="5" y="108.5" width="5" height="1" fill="#a0a0a0"/><rect x="7" y="114.5" width="2" height="1" fill="#b4b4b4"/><rect x="5" y="120.5" width="5" height="1" fill="#a0a0a0"/><rect x="7" y="126.5" width="2" height="1" fill="#b4b4b4"/><text transform="translate(11.5 133.0) rotate(-90)" text-anchor="middle">4</text><rect x="7" y="138.5" width="2" height="1" fill="#b4b4b4"/><rect x="5" y="144.5" width="5" height="1" fill="#a0a0a0"/><rect x="7" y="150.5" width="2" height="1" fill="#b4b4b4"/><rect x="5" y="156.5" width="5" height="1" fill="#a0a0a0"/><rect x="7" y="162.5" width="2" height="1" fill="#b4b4b4"/><rect x="5" y="168.5" width="5" height="1" fill="#a0a0a0"/><rect x="7" y="174.5" width="2" height="1" fill="#b4b4b4"/><text transform="translate(11.5 181.0) rotate(-90)" text-anchor="middle">2</text><rect x="7" y="186.5" width="2" height="1" fill="#b4b4b4"/><rect x="5" y="192.5" width="5" height="1" fill="#a0a0a0"/><rect x="7" y="198.5" width="2" height="1" fill="#b4b4b4"/><rect x="5" y="204.5" width="5" height="1" fill="#a0a0a0"/><rect x="7" y="210.5" width="2" height="1" fill="#b4b4b4"/><rect x="5" y="216.5" width="5" height="1" fill="#a0a0a0"/><rect x="7" y="222.5" width="2" height="1" fill="#b4b4b4"/><text transform="translate(11.5 229.0) rotate(-90)" text-anchor="middle">0</text><rect x="7" y="234.5" width="2" height="1" fill="#b4b4b4"/><rect x="5" y="240.5" width="5" height="1" fill="#a0a0a0"/><rect x="7" y="246.5" width="2" height="1" fill="#b4b4b4"/><rect x="5" y="252.5" width="5" height="1" fill="#a0a0a0"/><rect x="7" y="258.5" width="2" height="1" fill="#b4b4b4"/><rect x="5" y="264.5" width="5" height="1" fill="#a0a0a0"/><rect x="7" y="270.5" width="2" height="1" fill="#b4b4b4"/><text transform="translate(11.5 277.0) rotate(-90)" text-anchor="middle">2</text><rect x="7" y="282.5" width="2" height="1" fill="#b4b4b4"/><rect x="5" y="288.5" width="5" height="1" fill="#a0a0a0"/><rect x="7" y="294.5" width="2" height="1" fill="#b4b4b4"/><rect x="5" y="300.5" width="5" height="1" fill="#a0a0a0"/><rect x="7" y="306.5" width="2" height="1" fill="#b4b4b4"/><rect x="5" y="312.5" width="5" height="1" fill="#a0a0a0"/><rect x="7" y="318.5" width="2" height="1" fill="#b4b4b4"/><text transform="translate(11.5 325.0) rotate(-90)" text-anchor="middle">4</text><rect x="7" y="330.5" width="2" height="1" fill="#b4b4b4"/><rect x="5" y="336.5" width="5" height="1" fill="#a0a0a0"/><rect x="7" y="342.5" width="2" height="1" fill="#b4b4b4"/><rect x="5" y="348.5" width="5" height="1" fill="#a0a0a0"/><rect x="7" y="354.5" width="2" height="1" fill="#b4b4b4"/><rect x="5" y="360.5" width="5" height="1" fill="#a0a0a0"/><rect x="7" y="366.5" width="2" height="1" fill="#b4b4b4"/><text transform="translate(11.5 373.0) rotate(-90)" text-anchor="middle">6</text><rect x="7" y="378.5" width="2" height="1" fill="#b4b4b4"/><rect x="5" y="384.5" width="5" height="1" fill="#a0a0a0"/><rect x="7" y="390.5" width="2" height="1" fill="#b4b4b4"/><rect x="5" y="396.5" width="5" height="1" fill="#a0a0a0"/><rect x="7" y="402.5" width="2" height="1" fill="#b4b4b4"/><rect x="5" y="408.5" width="5" height="1" fill="#a0a0a0"/><rect x="7" y="414.5" width="2" height="1" fill="#b4b4b4"/><text transform="translate(11.5 421.0) rotate(-90)" text-anchor="middle">8</text><rect x="7" y="426.5" width="2" height="1" fill="#b4b4b4"/><rect x="5" y="432.5" width="5" height="1" fill="#a0a0a0"/><rect x="7" y="438.5" width="2" height="1" fill="#b4b4b4"/><rect x="5" y="444.5" width="5" height="1" fill="#a0a0a0"/><rect x="7" y="450.5" width="2" height="1" fill="#b4b4b4"/><path d="M1 121.5 H14" stroke="#c0504d" stroke-width="1" stroke-dasharray="3 2" opacity=".8"/></svg>
<div id="slide" class="abs">
<div id="band" class="abs"></div>
<svg class="abs" style="left:0;top:0" width="814" height="457" viewBox="174 58 814 457">
<defs>
<radialGradient id="oc" gradientUnits="userSpaceOnUse" cx="470" cy="262" r="240" gradientTransform="translate(0 70) scale(1 .735)"><stop offset="0" stop-color="#1d6c87"/><stop offset=".3" stop-color="#19637d"/><stop offset=".6" stop-color="#165972"/><stop offset=".85" stop-color="#134e67"/><stop offset="1" stop-color="#10445c"/></radialGradient>
<linearGradient id="ocs" gradientUnits="userSpaceOnUse" x1="0" y1="165" x2="0" y2="466"><stop offset="0" stop-color="#03192b" stop-opacity="0"/><stop offset=".7" stop-color="#03192b" stop-opacity="0"/><stop offset="1" stop-color="#03192b" stop-opacity=".28"/></linearGradient>
<radialGradient id="limb" cx=".5" cy=".5" r=".5"><stop offset="0" stop-color="#04121f" stop-opacity="0"/><stop offset=".9" stop-color="#04121f" stop-opacity="0"/><stop offset=".98" stop-color="#04121f" stop-opacity=".14"/><stop offset="1" stop-color="#04121f" stop-opacity=".3"/></radialGradient>
<linearGradient id="gTop" gradientUnits="userSpaceOnUse" x1="440" y1="150" x2="660" y2="260"><stop offset="0" stop-color="#72aa2c"/><stop offset=".4" stop-color="#679c25"/><stop offset="1" stop-color="#5b8f20"/></linearGradient>
<linearGradient id="gFront" gradientUnits="userSpaceOnUse" x1="0" y1="191" x2="0" y2="217"><stop offset="0" stop-color="#3d7212"/><stop offset=".25" stop-color="#4a8418"/><stop offset=".7" stop-color="#437a15"/><stop offset="1" stop-color="#335f0e"/></linearGradient>
<linearGradient id="gSide" gradientUnits="userSpaceOnUse" x1="570" y1="200" x2="665" y2="258"><stop offset="0" stop-color="#3a6d12"/><stop offset=".6" stop-color="#33620f"/><stop offset="1" stop-color="#3f7215"/></linearGradient>
<linearGradient id="gBot" gradientUnits="userSpaceOnUse" x1="470" y1="450" x2="490" y2="498"><stop offset="0" stop-color="#6a9e28"/><stop offset=".5" stop-color="#598c1f"/><stop offset="1" stop-color="#487816"/></linearGradient>
<filter id="b2"><feGaussianBlur stdDeviation="2"/></filter>
<clipPath id="gc"><ellipse cx="446" cy="315.5" rx="203.5" ry="150.5"/></clipPath>
<clipPath id="naC"><path d="M340 187 L325 203 L315 216 L309 228 L305 237 L304 246 L306 257 L309 267 L313 271 L317.900 275.300 L324.900 282.300 L335.300 288.400 L347.500 291 L359.700 295.400 L371.900 301.500 L382.400 308.400 L392.800 314.500 L401.500 318 L412 316.500 L416 317.500 L414 313 L410 313.700 L401.500 312 L394.600 305 L392.800 296.200 L384 291 L375.400 290 L377 282.300 L382.400 275.300 L373.700 273.600 L368.400 277 L365 282.300 L352.700 281.400 L345.800 275.300 L344 266.600 L347.500 257.900 L356.200 250 L368.400 247.400 L380.600 247.400 L394.600 248.300 L401.500 254.400 L405.900 260.500 L410.300 257.900 L408.500 245.700 L415.500 238.700 L426 231.700 L436 224 L446.500 217 L470 214 L500 214 L500 150 L330 150 Z"/></clipPath>
<clipPath id="saC"><path d="M416.300 316.300 L427 308.700 L442.300 304 L454.500 308.700 L466.600 313.300 L475.800 308.700 L486.500 311.800 L495.600 319.400 L510.900 322.400 L526 327 L533.700 336 L547.400 340.700 L565.700 345.300 L581 351.400 L584.600 359 L578 371.200 L570.300 383.400 L561 395.600 L547.400 404.800 L532.200 412.400 L523 423 L507.800 432.200 L495.600 438.300 L483.400 441.300 L471.200 444.400 L463.600 450.500 L456 459.600 L445.300 461 L440.700 453.500 L442.300 441.300 L446.800 429 L451.400 413.900 L449.900 400 L440.700 391 L425.500 380.400 L413.300 369.700 L404.100 360.500 L402.600 351.400 L410.200 340.700 L417.900 330 L419.400 322.400 Z"/></clipPath>
<clipPath id="afC"><path d="M596 205 L599.600 217.500 L610.600 241 L615.300 266 L623 288 L634 305 L642 310.600 L650 309 L652 285 L640 250 L625 225 L615 205 Z"/></clipPath>
<filter id="grass" x="-5%" y="-5%" width="110%" height="110%">
<feTurbulence type="fractalNoise" baseFrequency=".55 .38" numOctaves="2" seed="3" result="n"/>
<feColorMatrix in="n" type="matrix" values="0 0 0 0 0  0 0 0 0 0  0 0 0 0 0  1.8 0 0 0 -.72" result="a"/>
<feFlood flood-color="#2c5208" result="f"/>
<feComposite in="f" in2="a" operator="in" result="dark"/>
<feColorMatrix in="n" type="matrix" values="0 0 0 0 0  0 0 0 0 0  0 0 0 0 0  0 1.6 0 0 -.78" result="b"/>
<feFlood flood-color="#8fc038" result="g"/>
<feComposite in="g" in2="b" operator="in" result="light"/>
<feMerge result="m"><feMergeNode in="SourceGraphic"/><feMergeNode in="dark"/><feMergeNode in="light"/></feMerge>
<feComposite in="m" in2="SourceGraphic" operator="in"/>
</filter>
<filter id="land" x="0" y="0" width="100%" height="100%">
<feTurbulence type="fractalNoise" baseFrequency=".07" numOctaves="2" seed="8" result="n1"/>
<feColorMatrix in="n1" type="matrix" values="0 0 0 0 0  0 0 0 0 0  0 0 0 0 0  1.8 0 0 0 -.95" result="a1"/>
<feFlood flood-color="#a4c061" result="f1"/>
<feComposite in="f1" in2="a1" operator="in" result="yel"/>
<feColorMatrix in="n1" type="matrix" values="0 0 0 0 0  0 0 0 0 0  0 0 0 0 0  0 2.4 0 0 -1.1" result="a2"/>
<feFlood flood-color="#3f7a26" result="f2"/>
<feComposite in="f2" in2="a2" operator="in" result="dkg"/>
<feTurbulence type="fractalNoise" baseFrequency=".45" numOctaves="2" seed="21" result="n2"/>
<feColorMatrix in="n2" type="matrix" values="0 0 0 0 0  0 0 0 0 0  0 0 0 0 0  1.5 0 0 0 -.92" result="a3"/>
<feFlood flood-color="#e2d4b0" result="f3"/>
<feComposite in="f3" in2="a3" operator="in" result="tan"/>
<feColorMatrix in="n2" type="matrix" values="0 0 0 0 0  0 0 0 0 0  0 0 0 0 0  0 1.5 0 0 -.72" result="a4"/>
<feFlood flood-color="#2f5f1c" result="f4"/>
<feComposite in="f4" in2="a4" operator="in" result="dk"/>
<feMerge><feMergeNode in="SourceGraphic"/><feMergeNode in="yel"/><feMergeNode in="dkg"/><feMergeNode in="tan"/><feMergeNode in="dk"/></feMerge>
</filter>
<filter id="sea" x="0" y="0" width="100%" height="100%">
<feTurbulence type="fractalNoise" baseFrequency=".8" numOctaves="2" seed="5" result="n"/>
<feColorMatrix in="n" type="matrix" values="0 0 0 0 .6  0 0 0 0 .82  0 0 0 0 .9  1.2 0 0 0 -.5"/>
</filter>
<filter id="b1"><feGaussianBlur stdDeviation="1"/></filter>
<filter id="b3"><feGaussianBlur stdDeviation="3"/></filter>
<filter id="b5"><feGaussianBlur stdDeviation="5"/></filter>
<filter id="b8"><feGaussianBlur stdDeviation="8"/></filter>
</defs>
<g id="globeAll">
<!-- bottom arrow -->
<g filter="url(#grass)">
<path fill="url(#gBot)" d="M370.0 459.8 C370.0 459.8 371.0 466.5 371.0 466.5 C371.0 466.5 384.5 467.2 389.8 469.0 C395.1 470.8 397.2 473.7 403.0 477.0 C408.8 480.3 416.3 485.9 424.3 489.0 C432.3 492.1 442.0 494.4 450.9 495.7 C459.8 497.0 468.5 497.7 477.4 497.0 C486.2 496.3 494.3 493.9 504.0 491.7 C513.7 489.5 525.2 486.4 535.8 483.7 C546.4 481.0 558.8 478.1 567.7 475.7 C576.6 473.2 584.4 471.0 589.0 469.0 C593.6 467.0 594.7 466.2 595.6 463.8 C596.5 461.4 595.8 457.1 594.2 454.5 C592.6 451.9 589.5 449.2 586.0 447.9 C582.5 446.6 578.7 446.2 573.0 446.5 C567.3 446.8 558.9 448.4 551.8 449.7 C544.7 451.0 537.6 453.1 530.5 454.5 C523.4 455.9 516.4 457.2 509.3 458.0 C502.2 458.8 496.9 458.7 488.0 459.0 C479.1 459.3 465.7 460.0 456.0 460.0 C446.3 460.0 438.4 459.5 429.6 459.0 C420.8 458.5 410.5 457.5 403.0 457.0 C395.5 456.5 390.0 455.5 384.5 456.0 C379.0 456.5 370.0 459.8 370.0 459.8 Z"/>
</g>
<!-- globe -->
<ellipse cx="446" cy="315.500" rx="203.500" ry="150.500" fill="url(#oc)"/>
<g clip-path="url(#gc)">
<!-- lighter shelf seas -->
<ellipse cx="372" cy="262" rx="26" ry="14" fill="#2b7f9b" opacity=".7" filter="url(#b5)"/>
<ellipse cx="425" cy="292" rx="32" ry="13" fill="#24748f" opacity=".6" filter="url(#b5)"/>
<ellipse cx="520" cy="270" rx="70" ry="40" fill="#1d6a87" opacity=".5" filter="url(#b8)"/>
<ellipse cx="612" cy="335" rx="48" ry="85" fill="#0e3b58" opacity=".55" filter="url(#b8)"/>
<rect x="240" y="160" width="420" height="310" fill="#fff" filter="url(#sea)" opacity=".18"/>
<!-- North America -->
<g clip-path="url(#naC)"><g filter="url(#land)">
<rect x="295" y="150" width="210" height="175" fill="#76a542"/>
<ellipse cx="382" cy="228" rx="26" ry="18" fill="#a3bd66" filter="url(#b8)"/>
<ellipse cx="420" cy="236" rx="18" ry="16" fill="#5f9436" filter="url(#b5)"/>
<ellipse cx="400" cy="215" rx="22" ry="10" fill="#6c9c3c" filter="url(#b5)"/>
<path d="M330 190 L346 187 L350 225 L346 252 L340 268 L346 282 L366 296 L340 296 L295 270 L300 215 Z" fill="#baa283" filter="url(#b5)"/>
<path d="M324 205 L345 178 L440 163 L440 180 L390 188 L352 206 Z" fill="#8f9c62" filter="url(#b5)"/>
<path d="M338 190 L362 172 L432 164 L432 169 L372 180 Z" fill="#a89a80" filter="url(#b3)"/>
<path d="M360 283 L376 274 L384 276 L380 290 L394 296 L398 310 L414 315 L400 319 L380 306 L360 294 Z" fill="#84bb47" filter="url(#b1)"/>
</g></g>
<path d="M309.500 243 L312.500 258 L313.500 268" fill="none" stroke="#1d5a78" stroke-width="1.600" stroke-linecap="round"/>
<!-- South America -->
<g clip-path="url(#saC)"><g filter="url(#land)">
<rect x="398" y="298" width="192" height="166" fill="#78aa40"/>
<ellipse cx="486" cy="366" rx="50" ry="26" fill="#699f38" filter="url(#b8)"/>
<ellipse cx="450" cy="345" rx="22" ry="18" fill="#7aae40" filter="url(#b8)"/>
<path d="M538 336 L590 345 L590 365 L572 390 L548 408 L522 425 L514 416 L540 397 L555 374 L556 354 Z" fill="#c9a77f" filter="url(#b3)"/><path d="M500 322 L530 330 L545 342 L540 350 L520 340 L498 330 Z" fill="#b7b473" filter="url(#b3)"/>
<path d="M506 424 L528 414 L520 428 L492 445 L466 452 L452 466 L436 460 L440 440 L450 406 L462 398 L478 406 L492 420 Z" fill="#ad8c72" filter="url(#b3)"/>
<path d="M520 400 L545 392 L540 408 L520 422 L500 430 Z" fill="#a5a268" filter="url(#b5)"/>
<path d="M401 358 L404 345 L413 331 L417 318 L421 320 L417 334 L409 348 L408 360 L426 376 L442 388 L453 400 L455 416 L448 430 L449 402 L438 393 L420 380 Z" fill="#c9b08e" filter="url(#b2)"/>
<path d="M428 308 L450 303 L470 311 L497 319 L512 323 L530 331 L528 336 L492 326 L465 319 L440 315 Z" fill="#a8b66c" filter="url(#b3)"/>
</g></g>
<!-- lakes, Hudson bay -->
<ellipse cx="396" cy="203" rx="6" ry="2.200" fill="#245a76" transform="rotate(-12 396 203)"/><ellipse cx="400.500" cy="211" rx="2.500" ry="4" fill="#245a76" transform="rotate(25 400.500 211)"/><ellipse cx="383.500" cy="193.500" rx="2.200" ry="1.600" fill="#2d5f6e"/>
<path d="M402 180 Q408 174 416 174 Q421 176 417 181 Q413 188 406 186.500 Q401 184 402 180 Z" fill="#235a78" filter="url(#b1)"/>
<!-- Caribbean islands -->
<path fill="#a9b56c" d="M392.500 271.500 L402 269.800 L414 271 L429 276.500 L428.500 279 L416 275.500 L403 273 L394 273.500 Z"/>
<path fill="#b0b070" d="M437 279 L445 279.500 L450 283 L447 285 L439 283 Z"/>
<!-- Africa / Europe sliver -->
<g clip-path="url(#afC)"><rect x="590" y="190" width="70" height="125" fill="#cfa98c"/><path d="M598 210 L611 241 L616 266 L624 288 L635 305 L641 300 L630 280 L622 255 L614 230 Z" fill="#dfc0a8" filter="url(#b2)"/><path d="M622 225 L640 255 L650 285 L650 312 L660 312 L660 225 Z" fill="#8a644a" opacity=".5" filter="url(#b3)"/></g>
<!-- arrow shadow on globe -->
<path fill="#04131f" opacity=".42" filter="url(#b8)" d="M405 205 L420 232 L480 236 L545 240 L585 250 L612 275 L640 290 L670 280 L665 215 L600 190 L430 185 Z"/>
<path fill="#04131a" opacity=".75" filter="url(#b2)" d="M410.0 209.0 C409.5 208.0 411.7 213.0 417.0 214.0 C422.3 215.0 433.7 215.0 442.0 215.0 C450.3 215.0 458.3 214.0 467.0 214.0 C475.7 214.0 485.7 214.6 494.0 215.0 C502.3 215.4 508.7 216.0 517.0 216.5 C525.3 217.0 537.5 218.2 544.0 218.0 C550.5 217.8 553.3 216.8 556.0 215.0 C558.7 213.2 558.3 208.0 560.0 207.0 C561.7 206.0 562.3 208.3 566.0 209.0 C569.7 209.7 576.7 210.0 582.0 211.0 C587.3 212.0 593.3 213.2 598.0 215.0 C602.7 216.8 606.7 218.8 610.0 221.5 C613.3 224.2 615.2 227.3 618.0 231.0 C620.8 234.7 623.8 239.8 627.0 243.5 C630.2 247.2 633.2 250.7 637.0 253.5 C640.8 256.3 646.0 259.1 650.0 260.5 C654.0 261.9 660.7 261.1 661.0 262.0 C661.3 262.9 656.2 266.0 652.0 266.0 C647.8 266.0 641.0 264.7 636.0 262.0 C631.0 259.3 626.0 254.3 622.0 250.0 C618.0 245.7 615.0 239.8 612.0 236.0 C609.0 232.2 607.7 229.3 604.0 227.0 C600.3 224.7 596.3 223.2 590.0 222.0 C583.7 220.8 573.3 219.7 566.0 220.0 C558.7 220.3 554.3 223.7 546.0 224.0 C537.7 224.3 529.3 222.7 516.0 222.0 C502.7 221.3 482.0 220.3 466.0 220.0 C450.0 219.7 429.3 221.8 420.0 220.0 C410.7 218.2 410.5 210.0 410.0 209.0 Z"/>
<ellipse cx="446" cy="315.500" rx="203.500" ry="150.500" fill="url(#ocs)"/>
<ellipse cx="446" cy="315.500" rx="203.500" ry="150.500" fill="url(#limb)"/>
</g>
<!-- top arrow -->
<g filter="url(#grass)">
<path fill="url(#gTop)" d="M480.2 146.4 C483.3 146.5 486.9 148.2 490.3 149.2 C493.7 150.2 495.9 152.0 500.3 152.6 C504.8 153.2 510.1 152.4 517.0 153.0 C524.0 153.6 534.7 154.5 542.0 155.9 C549.3 157.3 554.3 159.0 560.9 161.5 C567.5 164.0 574.8 167.6 581.8 170.9 C588.8 174.2 595.7 177.7 602.7 181.3 C609.7 185.0 616.6 188.3 623.6 192.8 C630.6 197.3 638.6 203.1 644.5 208.5 C650.4 213.9 655.0 220.0 659.0 225.2 C663.0 230.4 666.3 235.6 668.5 239.8 C670.7 244.0 671.8 247.5 672.0 250.3 C672.2 253.1 671.3 254.8 669.5 256.5 C667.7 258.2 664.3 260.2 661.2 260.7 C658.1 261.2 654.5 261.1 650.7 259.7 C646.9 258.3 642.0 255.4 638.2 252.4 C634.4 249.4 630.8 245.7 627.7 241.9 C624.6 238.1 622.2 233.1 619.4 229.4 C616.6 225.8 614.5 222.6 611.0 220.0 C607.5 217.4 603.4 215.4 598.5 213.7 C593.6 211.9 587.4 210.6 581.8 209.5 C576.2 208.4 568.7 208.4 565.0 207.4 C561.3 206.4 559.8 203.5 559.8 203.5 C559.8 203.5 559.8 206.7 558.8 208.6 C557.8 210.5 556.3 213.8 553.8 215.2 C551.3 216.6 549.9 216.9 543.8 216.9 C537.7 216.9 525.4 215.8 517.0 215.2 C508.6 214.6 502.0 214.0 493.6 213.6 C485.2 213.2 475.5 212.7 466.9 212.7 C458.3 212.7 450.2 213.6 441.8 213.6 C433.4 213.6 422.1 213.5 416.7 212.7 C411.3 211.9 410.9 210.4 409.2 208.6 C407.5 206.8 407.0 204.1 406.7 201.9 C406.4 199.7 406.4 197.4 407.5 195.2 C408.6 193.0 410.5 191.3 413.4 188.5 C416.3 185.7 420.8 181.8 425.0 178.5 C429.2 175.2 433.4 171.8 438.4 168.4 C443.4 165.1 449.6 161.7 455.2 158.4 C460.8 155.1 467.7 150.4 471.9 148.4 C476.1 146.4 477.1 146.3 480.2 146.4 Z"/>
<path fill="url(#gFront)" d="M408.0 194.0 C408.0 194.0 423.6 191.2 433.4 191.0 C443.2 190.8 455.8 192.4 466.9 192.7 C478.0 193.0 489.2 192.8 500.3 192.7 C511.4 192.5 524.5 192.1 533.7 191.8 C542.9 191.5 551.2 189.6 555.5 191.0 C559.8 192.4 559.1 197.3 559.6 200.2 C560.1 203.1 559.8 206.1 558.8 208.6 C557.8 211.1 556.3 213.8 553.8 215.2 C551.3 216.6 549.9 216.9 543.8 216.9 C537.7 216.9 525.4 215.8 517.0 215.2 C508.6 214.6 502.0 214.0 493.6 213.6 C485.2 213.2 475.5 212.7 466.9 212.7 C458.3 212.7 450.2 213.6 441.8 213.6 C433.4 213.6 422.1 213.5 416.7 212.7 C411.3 211.9 410.9 210.4 409.2 208.6 C407.5 206.8 406.9 204.3 406.7 201.9 C406.5 199.5 408.0 194.0 408.0 194.0 Z"/>
<path fill="url(#gSide)" d="M560.9 195.0 C560.9 195.0 574.8 193.2 581.8 193.9 C588.8 194.6 595.7 196.2 602.7 199.0 C609.7 201.8 617.3 206.2 623.6 210.6 C629.9 215.0 635.1 220.0 640.3 225.2 C645.5 230.4 650.4 237.0 654.9 241.9 C659.4 246.8 665.0 252.0 667.4 254.4 C669.8 256.8 669.5 256.5 669.5 256.5 C669.5 256.5 664.3 260.2 661.2 260.7 C658.1 261.2 654.5 261.1 650.7 259.7 C646.9 258.3 642.0 255.4 638.2 252.4 C634.4 249.4 630.8 245.7 627.7 241.9 C624.6 238.1 622.2 233.1 619.4 229.4 C616.6 225.8 614.5 222.6 611.0 220.0 C607.5 217.4 603.4 215.4 598.5 213.7 C593.6 211.9 587.4 210.6 581.8 209.5 C576.2 208.4 568.7 208.4 565.0 207.4 C561.3 206.4 559.8 203.5 559.8 203.5 C559.8 203.5 560.9 195.0 560.9 195.0 Z"/>
</g>
</g>
</svg>

<div class="t1">موضوع<span>:</span></div>
<div class="t2" style="top:308px">استاد راهنما:</div>
<div class="t2" style="top:338px">ارائه دهنده:</div>
</div>
<div id="rscroll" class="abs">
<div class="sbtn" style="left:1px;top:0;width:15px;height:15px"><div class="arr-up"></div></div>
<div class="sbtn" style="left:1px;top:27px;width:15px;height:17px"></div>
<div class="sbtn" style="left:1px;top:481px;width:15px;height:15px"><div class="arr-dn"></div></div>
<svg class="abs" style="left:3px;top:499px" width="12" height="32"><path d="M6 1.5 L10 6 H2 Z M6 6.5 L10 11 H2 Z M2 19 H10 L6 23.5 Z M2 24 H10 L6 28.5 Z" fill="#555"/></svg>
</div>
<div id="status" class="abs">
<span style="left:2px">Slide 2 of 40</span>
<span style="left:115px">Persian (Iran)</span>
<span style="left:526px">Notes</span>
<span style="left:593px">Comments</span>
<span style="left:959px">64 %</span>
<svg class="abs" style="left:0;top:-1px" width="1017" height="20" viewBox="0 554 1017 20" fill="#fff">
<!-- spell check book -->
<path d="M85 560 h5.500 v9.500 h-5.500 z M91 560 h5.500 v9.500 h-5.500 z" fill="none" stroke="#fff" stroke-width="1.100"/>
<path d="M90.700 569.500 v3.200 M89 571.200 l1.700 1.700 l1.700 -1.700" fill="none" stroke="#fff" stroke-width="1"/>
<path d="M92.300 565 l1.800 2 l3.400 -4.600" fill="none" stroke="#fff" stroke-width="1.300"/>
<!-- notes icon -->
<path d="M515.500 560 l3 3 h-6 z"/><rect x="510" y="564.300" width="11" height="1.200"/><rect x="510" y="567.300" width="11" height="1.200"/><rect x="510" y="570.300" width="11" height="1.200"/>
<!-- comments icon -->
<path d="M577 560.500 h11.500 v8 h-5 l-3 3.200 v-3.200 h-3.500 z"/>
<!-- selected view -->
<rect x="666" y="555" width="38" height="19" fill="#b53a1c"/>
<path d="M678.500 559.500 h14 v12.500 h-14 z M683.500 561 v9.500 h7.500 v-9.500 z" fill-rule="evenodd"/>
<rect x="684.700" y="562.300" width="5" height="3.500"/><rect x="684.700" y="567.500" width="5" height="1.200"/>
<!-- sorter -->
<rect x="716.500" y="559.500" width="6" height="5.500"/><rect x="724.500" y="559.500" width="6" height="5.500"/><rect x="716.500" y="567" width="6" height="5.500"/><rect x="724.500" y="567" width="6" height="5.500"/>
<!-- reading view -->
<path d="M754 560 q3.500 -1 6 .8 q2.500 -1.800 6.500 -.8 v11 q-4 -1 -6.500 .8 q-2.500 -1.800 -6 -.8 z" fill="none" stroke="#fff" stroke-width="1.100"/>
<path d="M760.200 560.800 v11.800 M755.800 562.800 h3 M755.800 565 h3 M755.800 567.200 h3 M755.800 569.400 h3 M761.800 562.800 h3 M761.800 565 h3 M761.800 567.200 h3 M761.800 569.400 h3" stroke="#fff" stroke-width=".9" fill="none"/>
<!-- slideshow -->
<path d="M792.500 560 h12.500 v1.600 h-12.500 z"/><path d="M794 561.600 h9.500 v5.400 h-9.500 z" fill="none" stroke="#fff" stroke-width="1.100"/><path d="M798.700 567 v4 M796 571.500 h5.500" stroke="#fff" stroke-width="1.200" fill="none"/>
<!-- zoom -->
<rect x="823" y="565" width="6.500" height="1.600"/>
<rect x="833" y="565.300" width="100" height="1" opacity=".9"/>
<rect x="861.500" y="560" width="4.500" height="12"/>
<rect x="883" y="562.300" width="1" height="7" opacity=".9"/>
<path d="M937 565 h3 v-3 h1.800 v3 h3 v1.800 h-3 v3 h-1.800 v-3 h-3 z"/>
<!-- fit -->
<rect x="998.200" y="561" width="12.500" height="11.500" fill="none" stroke="#fff" stroke-width="1.100"/>
<path d="M1004.500 562.500 v3 M1003 564 h3 M1004.500 568 v3 M1003 569.500 h3 M1000 566.800 h3 M1001.500 565.300 v3 M1006 566.800 h3 M1007.500 565.300 v3" stroke="#fff" stroke-width=".9" fill="none"/>
</svg>

</div>
</body>
</html>
